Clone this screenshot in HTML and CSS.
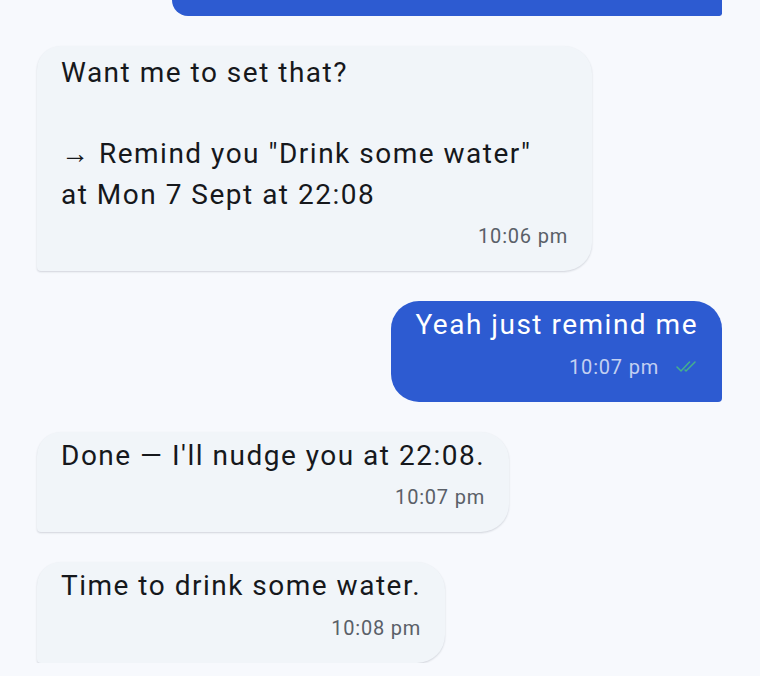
FILE: index.html
```html
<!DOCTYPE html>
<html lang="en">
<head>
<meta charset="utf-8">
<title>Chat</title>
<link rel="stylesheet" href="styles.css">
</head>
<body>
<div class="chat">
  <div class="row out">
    <div class="bubble sent cut"></div>
  </div>

  <div class="row in">
    <div class="bubble recv wide">
      <p class="text first">Want me to set that?<br><br>→ Remind you "Drink some water"<br>at Mon 7 Sept at 22:08</p>
      <div class="meta"><span class="time">10:06 pm</span></div>
    </div>
  </div>

  <div class="row out">
    <div class="bubble sent">
      <p class="text">Yeah just remind me</p>
      <div class="meta">
        <span class="time">10:07 pm</span>
        <svg class="ticks" width="22" height="13" viewBox="0 0 22 13" aria-hidden="true">
          <path d="M1 7 L5 11 L13.5 2" fill="none" stroke="currentColor" stroke-width="1.5" stroke-linecap="round" stroke-linejoin="round"/>
          <path d="M9 10 L10 11 L19 2" fill="none" stroke="currentColor" stroke-width="1.5" stroke-linecap="round" stroke-linejoin="round"/>
        </svg>
      </div>
    </div>
  </div>

  <div class="row in">
    <div class="bubble recv">
      <p class="text">Done — I'll nudge you at 22:08.</p>
      <div class="meta"><span class="time">10:07 pm</span></div>
    </div>
  </div>

  <div class="row in">
    <div class="bubble recv">
      <p class="text">Time to drink some water.</p>
      <div class="meta"><span class="time">10:08 pm</span></div>
    </div>
  </div>
</div>
</body>
</html>
```

FILE: styles.css
```css
html, body {
  margin: 0;
  padding: 0;
}

body {
  background: #f7f9fd;
  font-family: Roboto, "Noto Sans", "Liberation Sans", sans-serif;
  color: #16181c;
  overflow: hidden;
}

.chat {
  display: flex;
  flex-direction: column;
  gap: 30px;
  padding: 0 38px 0 37px;
}

.row {
  display: flex;
}

.row.out {
  justify-content: flex-end;
}

.row.in {
  justify-content: flex-start;
}

.bubble {
  box-sizing: border-box;
  max-width: 555px;
  padding: 4px 24px 23px;
}

.recv {
  background: #f1f5f9;
  border-radius: 24px 28px 28px 4px;
  box-shadow: 0 1px 2px rgba(15, 23, 42, 0.16);
}

.sent {
  background: #2d5bd1;
  color: #ffffff;
  border-radius: 28px 28px 4px 28px;
}

.cut {
  width: 550px;
  height: 16px;
  padding: 0;
  border-radius: 0 0 4px 26px;
}

.wide {
  width: 555px;
}

.text {
  margin: 0;
  font-size: 28px;
  line-height: 40.5px;
  letter-spacing: 1.5px;
}

.text.first {
  padding-top: 3px;
}

.meta {
  display: flex;
  justify-content: flex-end;
  align-items: center;
  gap: 17px;
  margin-top: 9px;
  font-size: 20px;
  line-height: 24px;
  letter-spacing: 0.8px;
  color: #5a6068;
}

.sent .meta {
  color: rgba(255, 255, 255, 0.72);
}

.ticks {
  color: #45b08c;
  display: block;
}
```
